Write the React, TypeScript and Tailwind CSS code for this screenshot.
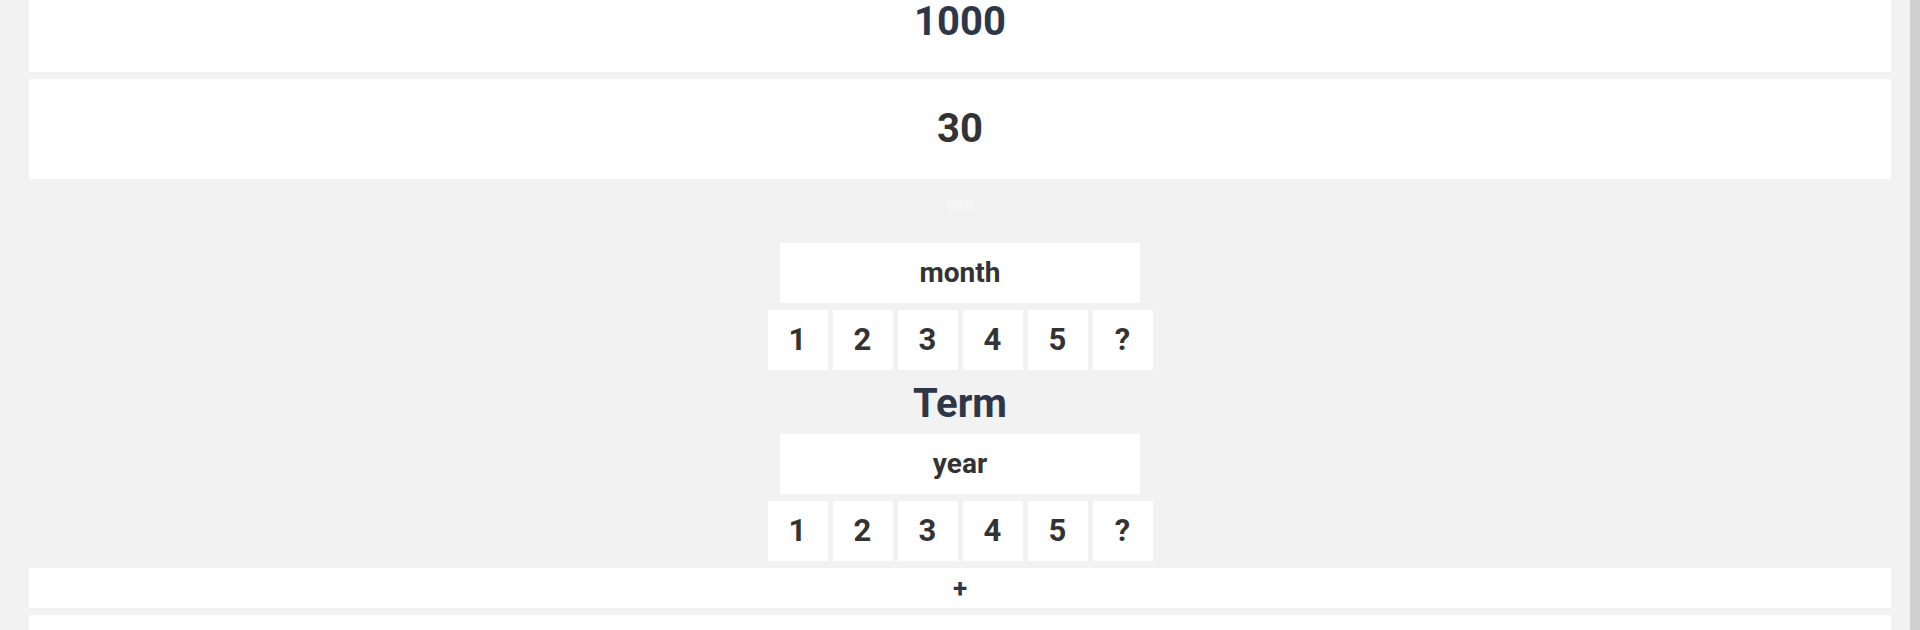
import type { ReactNode } from 'react';

const options = ['1', '2', '3', '4', '5', '?'];

function Panel({ children, className = '' }: { children?: ReactNode; className?: string }) {
  return (
    <div className={`w-full bg-white flex items-center justify-center font-bold ${className}`}>
      {children}
    </div>
  );
}

function UnitBox({ label }: { label: string }) {
  return (
    <div className="w-[360px] h-[60px] bg-white flex items-center justify-center text-[28px] font-bold text-[#333333]">
      {label}
    </div>
  );
}

function OptionRow() {
  return (
    <div className="flex gap-[5px]">
      {options.map((o) => (
        <button
          key={o}
          type="button"
          className="w-[60px] h-[60px] bg-white flex items-center justify-center text-[31px] font-bold text-[#333333]"
        >
          {o}
        </button>
      ))}
    </div>
  );
}

export default function App() {
  return (
    <div className="relative h-[630px] overflow-hidden bg-[#f2f2f2] font-['Roboto',sans-serif]">
      <div className="flex flex-col items-center gap-[7px] px-[29px] -mt-[28px]">
        <Panel className="h-[100px] text-[40px] text-[#2d3748]">1000</Panel>
        <Panel className="h-[100px] text-[40px] text-[#333333]">30</Panel>

        {/* fading hint */}
        <div className="h-[50px] flex items-start justify-center pt-[4px]">
          <div className="w-[240px] h-[30px] bg-[#f1f1f1] border border-[#eeeeee] rounded-sm flex items-center justify-center text-[16px] font-bold text-white/60 blur-[1px]">
            usd
          </div>
        </div>

        <UnitBox label="month" />
        <OptionRow />
        <div className="h-[50px] flex items-center justify-center pt-[3px] text-[40px] font-bold text-[#2d3748] leading-none">
          Term
        </div>
        <UnitBox label="year" />
        <OptionRow />

        <Panel className="h-[40px] text-[26px] text-[#2d3748]">+</Panel>
        <Panel className="h-[100px]" />
      </div>

      {/* scrollbar */}
      <div className="absolute right-0 top-0 w-[10px] h-full bg-[#d0d0d0]" />
    </div>
  );
}
